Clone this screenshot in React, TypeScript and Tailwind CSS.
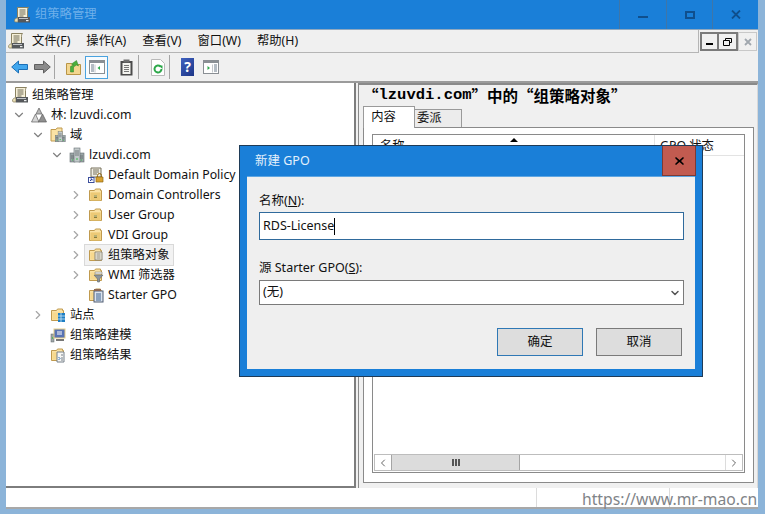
import { ChevronDown, ChevronLeft, ChevronRight } from 'lucide-react';
import type { ReactNode } from 'react';

const ui = 'font-["Noto_Sans","Noto_Sans_CJK_SC",sans-serif]';
const cjk = 'font-["Noto_Sans_CJK_SC",sans-serif]';

function Scroll({ size = 16 }: { size?: number }) {
  return (
    <svg width={size} height={size} viewBox="0 0 16 16">
      <path d="M3.500 .5h11c-1 1-1 2-1 3v7h-10z" fill="#f6f0d8" stroke="#8a8262" />
      <path d="M5.500 3h6M5.500 5h6M5.500 7h6M5.500 9h4" stroke="#6f6a56" />
      <path d="M.5 14c0-2.500 2-3.500 3.500-3v4H2c-1 0-1.500-.5-1.500-1z" fill="#ece2b8" stroke="#8a8262" strokeWidth=".8" />
      <rect x="4" y="10" width="12" height="5.500" fill="#55585b" />
      <rect x="5" y="11" width="9" height="1" fill="#c2c5c8" />
      <rect x="12" y="13" width="2.500" height="1.200" fill="#eceeef" />
    </svg>
  );
}

function Folder({ children }: { children?: ReactNode }) {
  return (
    <svg width="16" height="16" viewBox="0 0 16 16">
      <path d="M1.500 3.500h5l1-1.500h5v1.500h1v10h-12z" fill="#fae2a5" stroke="#c09a4e" />
      <path d="M2.500 5.500h10v7h-10z" fill="#f7d98e" />
      {children}
    </svg>
  );
}

function OuIcon() {
  return (
    <Folder>
      <rect x="2.500" y="5.500" width="10" height="8" fill="#ecc975" />
      <rect x="6" y="8" width="3" height="3" fill="#8b7a3a" />
      <path d="M6 9h3" stroke="#dfe7b0" />
    </Folder>
  );
}

function Servers() {
  return (
    <g>
      <rect x="1" y="6" width="5" height="9" fill="#9aa4a6" stroke="#677073" strokeWidth=".6" />
      <rect x="10" y="6" width="5" height="9" fill="#9aa4a6" stroke="#677073" strokeWidth=".6" />
      <rect x="5" y="1" width="6" height="14" fill="#c2c9ca" stroke="#677073" strokeWidth=".6" />
      <path d="M6 4h4M6 6h4M6 8h4M2 9h3M11 9h3M2 11h3M11 11h3" stroke="#5f686a" strokeWidth=".8" />
      <path d="M7 12h2M3 13h1M12 13h1" stroke="#39c24a" strokeWidth="1.200" />
    </g>
  );
}

function TreeIcon({ kind }: { kind: string }) {
  if (kind === 'root') return <Scroll />;
  if (kind === 'forest')
    return (
      <svg width="16" height="16" viewBox="0 0 16 16">
        <path d="M8 1l3 6H5z" fill="#b7b7b7" stroke="#5d5d5d" strokeWidth=".7" />
        <path d="M4.500 7l3.500 8H.5z" fill="#d6d6d6" stroke="#5d5d5d" strokeWidth=".7" />
        <path d="M11.500 7l4 8h-8z" fill="#8f8f8f" stroke="#5d5d5d" strokeWidth=".7" />
      </svg>
    );
  if (kind === 'domains')
    return (
      <svg width="16" height="16" viewBox="0 0 16 16">
        <path d="M1 2.500h5l1-1.500h5v13H1z" fill="#fae2a5" stroke="#c09a4e" />
        <g transform="translate(4.500 4) scale(.72)">
          <Servers />
        </g>
      </svg>
    );
  if (kind === 'domain')
    return (
      <svg width="16" height="16" viewBox="0 0 16 16">
        <Servers />
      </svg>
    );
  if (kind === 'policy')
    return (
      <svg width="16" height="16" viewBox="0 0 16 16">
        <path d="M3 1h10v9H3z" fill="#f1efe6" stroke="#77705a" />
        <path d="M5 3h6M5 5h6M5 7h4" stroke="#77705a" />
        <path d="M8 10h7v5H8z" fill="#d9a22f" stroke="#8f6716" strokeWidth=".7" />
        <path d="M9.500 10V8.500a2 2 0 014 0V10" fill="none" stroke="#8f6716" />
        <rect x=".5" y="10.500" width="5.500" height="5" fill="#fff" stroke="#3c4f9c" />
        <path d="M2 14l2-2M2.500 12H4v1.500" stroke="#2a3e9a" fill="none" />
      </svg>
    );
  if (kind === 'ou') return <OuIcon />;
  if (kind === 'gpo')
    return (
      <Folder>
        <path d="M7 5h7v8H7z" fill="#f2efe3" stroke="#8b8676" />
        <path d="M8.500 7h4M8.500 9h4M8.500 11h4" stroke="#8b8676" />
      </Folder>
    );
  if (kind === 'wmi')
    return (
      <Folder>
        <path d="M6 8h9l-3.500 4v3h-2v-3z" fill="#8c949c" stroke="#5c646c" strokeWidth=".6" />
        <path d="M7 5h7v2H7z" fill="#eef0f2" stroke="#8b8676" strokeWidth=".6" />
      </Folder>
    );
  if (kind === 'starter')
    return (
      <Folder>
        <rect x="6" y="4" width="9" height="11" fill="#dbe3ee" stroke="#4f5d73" />
        <path d="M8 7h5M8 9h5M8 11h5M8 13h5" stroke="#3d628f" />
        <path d="M6 2h7v2H6z" fill="#8f6a55" />
      </Folder>
    );
  if (kind === 'site')
    return (
      <Folder>
        <rect x="8" y="6" width="7" height="9" fill="#1f7fc4" />
        <path d="M8 9h7M8 12h7M11 6v9" stroke="#cfe7f7" strokeWidth=".8" />
      </Folder>
    );
  if (kind === 'model')
    return (
      <svg width="16" height="16" viewBox="0 0 16 16">
        <rect x="1" y="7" width="3" height="8" fill="#9ea5a8" stroke="#5f686a" strokeWidth=".5" />
        <rect x="4" y="2" width="11" height="9" fill="#5873b4" stroke="#e8cf87" />
        <path d="M7 5h5M7 7h5" stroke="#fff" />
        <path d="M6 13h8" stroke="#777" strokeWidth="2" />
        <path d="M2 11h1" stroke="#39c24a" strokeWidth="1.500" />
      </svg>
    );
  return (
    <Folder>
      <path d="M7 5h7v10H7z" fill="#f7f7f5" stroke="#77808a" />
      <path d="M8.500 10l1.500 1.500L8.500 13" stroke="#2f6db3" fill="none" />
      <path d="M11 8h2M11 11h2M11 13h2" stroke="#77808a" />
    </Folder>
  );
}

const tree = [
  { label: '组策略管理', icon: 'root', depth: 0, arrow: '' },
  { label: '林: lzuvdi.com', icon: 'forest', depth: 0, arrow: 'down' },
  { label: '域', icon: 'domains', depth: 1, arrow: 'down' },
  { label: 'lzuvdi.com', icon: 'domain', depth: 2, arrow: 'down' },
  { label: 'Default Domain Policy', icon: 'policy', depth: 3, arrow: '' },
  { label: 'Domain Controllers', icon: 'ou', depth: 3, arrow: 'right' },
  { label: 'User Group', icon: 'ou', depth: 3, arrow: 'right' },
  { label: 'VDI Group', icon: 'ou', depth: 3, arrow: 'right' },
  { label: '组策略对象', icon: 'gpo', depth: 3, arrow: 'right', selected: true },
  { label: 'WMI 筛选器', icon: 'wmi', depth: 3, arrow: 'right' },
  { label: 'Starter GPO', icon: 'starter', depth: 3, arrow: '' },
  { label: '站点', icon: 'site', depth: 1, arrow: 'right' },
  { label: '组策略建模', icon: 'model', depth: 1, arrow: '' },
  { label: '组策略结果', icon: 'result', depth: 1, arrow: '' },
];

const menus = ['文件(F)', '操作(A)', '查看(V)', '窗口(W)', '帮助(H)'];

function ToolButton({ active, children }: { active?: boolean; children: ReactNode }) {
  return (
    <div className={`flex h-[23px] w-[23px] items-center justify-center ${active ? 'border border-[#4aa3df] bg-[#f7fbfe]' : ''}`}>
      {children}
    </div>
  );
}

function Pane({ play }: { play: 'left' | 'right' }) {
  return (
    <svg width="16" height="14" viewBox="0 0 16 14">
      <rect x=".5" y=".5" width="15" height="13" fill="#fff" stroke="#8a8f94" />
      <rect x="1" y="1" width="14" height="2" fill="#8a8f94" />
      {play === 'left' ? (
        <>
          <path d="M2 5h3M2 7h3M2 9h3M2 11h3" stroke="#6b7a8a" />
          <path d="M6 4.500v8" stroke="#c2c6ca" />
          <path d="M11 6v4L8.500 8z" fill="#2da84a" />
        </>
      ) : (
        <>
          <path d="M11 5h3M11 7h3M11 9h3M11 11h3" stroke="#6b7a8a" />
          <path d="M4.500 6v4L7 8z" fill="#2da84a" />
          <path d="M9.500 4.500v8" stroke="#c2c6ca" />
        </>
      )}
    </svg>
  );
}

function Toolbar() {
  return (
    <div className="flex h-[30px] items-center border-b-2 border-[#9b9b9b] pl-[2px]">
      <ToolButton>
        <svg width="17" height="14" viewBox="0 0 17 14">
          <path d="M7.500 1L.7 7l6.800 6V9.500h9v-5h-9z" fill="#41a7ee" stroke="#1c6fb6" />
        </svg>
      </ToolButton>
      <ToolButton>
        <svg width="17" height="14" viewBox="0 0 17 14">
          <path d="M9.500 1l6.800 6-6.800 6V9.500h-9v-5h9z" fill="#8a8a8a" stroke="#5f5f5f" />
        </svg>
      </ToolButton>
      <div className="mr-[7px] h-[24px] w-px bg-[#a5a5a5]" />
      <ToolButton>
        <svg width="15" height="16" viewBox="0 0 15 16">
          <path d="M.5 4.500h5l1 1h8v10H.5z" fill="#f3d68f" stroke="#b99546" />
          <path d="M4.500 13V7.500l3-1.500-2-1 5-3.500 2 5.500-2-1-3 2v5z" fill="#49b03c" stroke="#2f7f28" strokeWidth=".5" />
        </svg>
      </ToolButton>
      <ToolButton active>
        <Pane play="left" />
      </ToolButton>
      <div className="ml-[7px]">
        <ToolButton>
          <svg width="13" height="17" viewBox="0 0 13 17">
            <rect x=".5" y="2" width="12" height="14.500" fill="#4b4b4b" />
            <rect x="2.500" y="4" width="8" height="11" fill="#f4f4f0" />
            <rect x="3.500" y=".5" width="6" height="3" fill="#6e6e6e" />
            <path d="M4 6.500h5M4 8.500h5M4 10.500h5M4 12.500h5" stroke="#777" />
          </svg>
        </ToolButton>
      </div>
      <div className="mr-[7px] h-[24px] w-px bg-[#a5a5a5]" />
      <ToolButton>
        <svg width="14" height="17" viewBox="0 0 14 17">
          <path d="M.5 .5h9l4 4v12H.5z" fill="#fff" stroke="#b9b9b9" />
          <path d="M10.500 10a3.500 3.500 0 11-1-2.500" fill="none" stroke="#2da84a" strokeWidth="2" />
          <path d="M7.500 6.500h4v3.500z" fill="#2da84a" />
        </svg>
      </ToolButton>
      <div className="mr-[6px] h-[24px] w-px bg-[#a5a5a5]" />
      <ToolButton>
        <div className={`flex h-[18px] w-[13px] items-center justify-center bg-[linear-gradient(135deg,#3f62c0,#1d3587)] text-[14px] font-bold leading-none text-white ${ui}`}>?</div>
      </ToolButton>
      <ToolButton>
        <Pane play="right" />
      </ToolButton>
    </div>
  );
}

function TreePane() {
  return (
    <div className="flex h-[405px] w-[350px] flex-col border-r-2 border-b-2 border-[#7d7d7d] bg-white pt-[2px] text-[12.300px] leading-[20px] text-[#111]">
      {tree.map((row) => (
        <div key={row.label} className="flex h-[20px] items-center pl-[5px]">
          <div className={row.depth === 1 ? 'w-[19px]' : row.depth === 2 ? 'w-[38px]' : row.depth === 3 ? 'w-[57px]' : 'w-0'} />
          <div className="flex w-[15px] justify-center">
            {row.arrow === 'down' && <ChevronDown size={14} strokeWidth={2} color="#808080" />}
            {row.arrow === 'right' && <ChevronRight size={14} strokeWidth={2} color="#a6a6a6" />}
          </div>
          <div className={`flex h-[20px] items-center gap-[4px] pl-[3px] pr-[3px] ${row.selected ? 'bg-[#f2f2f2] outline outline-[#d9d9d9]' : ''} ${row.depth === 0 && !row.arrow ? '-ml-[17px]' : 'ml-[2px]'}`}>
            <TreeIcon kind={row.icon} />
            <span className="whitespace-nowrap">{row.label}</span>
          </div>
        </div>
      ))}
    </div>
  );
}

function RightPane() {
  return (
    <div className="ml-[2px] flex h-[405px] flex-1 flex-col border-r border-l border-t-2 border-l-[#8a8a8a] border-r-[#d8d8d8] border-t-[#8a8a8a] pl-[4px] pr-[3px]">
      <div className='flex h-[21px] items-center font-["Liberation_Mono",monospace] text-[15.500px] font-bold text-black' lang="zh-CN">
        <span className={cjk}>“</span>
        <span>lzuvdi.com</span>
        <span className={cjk}>”中的“组策略对象”</span>
      </div>
      <div className="flex h-[21px] items-end text-[12.300px] text-[#111]">
        <div className="z-10 -mb-px flex h-[22px] w-[52px] items-center justify-center border border-b-0 border-[#9a9a9a] bg-white pr-[11px]">内容</div>
        <div className="flex h-[18px] w-[47px] items-center border border-l-0 border-b-0 border-[#9a9a9a] bg-[#ececec] pl-[2px]">委派</div>
      </div>
      <div className="h-[356px] border border-[#8a8a8a] bg-white pb-[9px] pl-[8px] pr-[8px] pt-[6px]">
        <div className="flex h-full flex-col border border-[#8a8a8a]">
          <div className="flex h-[21px] border-b border-[#e3e3e3] text-[12.300px] leading-[22px] text-[#111]">
            <div className="relative w-[282px] border-r border-[#e3e3e3] pl-[7px]">
              名称
              <div className="absolute left-[137px] top-[3px] h-0 w-0 border-x-[4px] border-b-[4px] border-x-transparent border-b-black" />
            </div>
            <div className="flex-1 pl-[5px]">GPO 状态</div>
          </div>
          <div className="flex-1" />
          <div className="mx-[1px] mb-[1px] flex h-[17px] border border-[#bdbdbd]">
            <div className="flex w-[16px] items-center justify-center">
              <ChevronLeft size={12} color="#666" />
            </div>
            <div className="flex w-[129px] items-center justify-center gap-[1px] border-x border-[#a5a5a5] bg-[#dcdcdc]">
              <div className="h-[7px] w-[2px] bg-[#555]" />
              <div className="h-[7px] w-[2px] bg-[#555]" />
              <div className="h-[7px] w-[2px] bg-[#555]" />
            </div>
            <div className="flex-1" />
            <div className="flex w-[17px] items-center justify-center border-l border-[#dcdcdc]">
              <ChevronRight size={12} color="#666" />
            </div>
          </div>
        </div>
      </div>
    </div>
  );
}

function Dialog() {
  return (
    <div className={`absolute left-[239px] top-[145px] flex h-[232px] w-[464px] flex-col border border-[#1f3b57] bg-[#1a7fd8] pb-[7px] pl-[7px] pr-[7px] text-[12.500px] text-[#111] ${ui}`}>
      <div className="-ml-[7px] -mr-[7px] flex h-[30px] items-start justify-between pl-[15px]">
        <span className="pt-[6px] text-[12.500px] leading-[18px] text-[#e4f1fc]">新建 GPO</span>
        <div className="mr-[6px] flex h-[30px] w-[34px] items-center justify-center border border-t-0 border-[#7c3a34] bg-[#c25b50]">
          <svg width="9" height="8" viewBox="0 0 9 8">
            <path d="M1 0l3.500 3L8 0l1 1-3 3 3 3-1 1-3.500-3L1 8 0 7l3-3-3-3z" fill="#000" />
          </svg>
        </div>
      </div>
      <div className="flex flex-1 flex-col border-t border-[#5fa6e2] bg-[#efefef] pl-[12px] pr-[11px]">
        <div className="mt-[15px] h-[18px] leading-[18px]">
          名称(<span className="underline">N</span>):
        </div>
        <div className="mt-[2px] flex h-[28px] items-center border border-[#2f6a9c] bg-white pl-[3px]">
          RDS-License
          <span className="h-[17px] w-px bg-black" />
        </div>
        <div className="mt-[19px] h-[18px] leading-[18px]">
          源 Starter GPO(<span className="underline">S</span>):
        </div>
        <div className="mt-[3px] flex h-[25px] items-center justify-between border border-[#7a7a7a] bg-white pl-[3px] pr-[2px]">
          (无)
          <ChevronDown size={12} strokeWidth={3} color="#555" />
        </div>
        <div className="mt-[23px] flex justify-end gap-[13px] pr-[2px]">
          <div className="flex h-[28px] w-[86px] items-center justify-center border border-[#2f78b5] bg-[#dddddd]">确定</div>
          <div className="flex h-[28px] w-[86px] items-center justify-center border border-[#7a7a7a] bg-[#dddddd]">取消</div>
        </div>
      </div>
    </div>
  );
}

export default function App() {
  return (
    <div className={`relative flex h-[514px] w-[765px] flex-col overflow-hidden bg-[#8cb4d9] pb-[5px] pl-[6px] pr-[7px] ${ui}`}>
      <div className="flex h-[30px] items-start border-b border-[#8fa8bf] bg-[#1a7fd8]">
        <div className="flex h-[29px] flex-1 items-center gap-[5px] pl-[8px]">
          <Scroll />
          <span className="text-[12.300px] text-[#6fb0ea]">组策略管理</span>
        </div>
        <div className="flex h-[29px] w-[47px] items-center justify-center border-l border-[#3f76a8]">
          <div className="mt-[4px] h-[2px] w-[10px] bg-[#0f4f8d]" />
        </div>
        <div className="flex h-[29px] w-[46px] items-center justify-center border-l border-[#3f76a8]">
          <div className="h-[8px] w-[10px] border-2 border-[#0f4f8d]" />
        </div>
        <div className="flex h-[29px] w-[46px] items-center justify-center border-l border-[#3f76a8]">
          <svg width="10" height="9" viewBox="0 0 10 9">
            <path d="M1 .5l8 8M9 .5l-8 8" stroke="#0f4f8d" strokeWidth="1.800" />
          </svg>
        </div>
      </div>
      <div className="flex flex-1 flex-col bg-[#f0f0f0]">
        <div className="flex h-[23px] items-center text-[12.300px] text-[#111]">
          <div className="flex h-full flex-1 items-center border-b border-r border-[#b5b5b5] pl-[2px]">
            <div className="mr-[8px]">
              <Scroll />
            </div>
            <div className="flex flex-1 gap-[16px] pt-[1px]">
              {menus.map((menu) => (
                <span key={menu}>{menu}</span>
              ))}
            </div>
          </div>
          <div className="ml-[1px] mr-[1px] flex">
            <div className="flex h-[19px] w-[19px] items-center justify-center border-2 border-[#7a7a7a]">
              <div className="mt-[5px] h-[2px] w-[7px] bg-black" />
            </div>
            <div className="flex h-[19px] w-[19px] items-center justify-center border-2 border-l-0 border-[#7a7a7a]">
              <svg width="9" height="8" viewBox="0 0 9 8">
                <path d="M2.500 2.500v-2h6v4h-2M.5 2.500h6v5h-6z" fill="none" stroke="#000" />
              </svg>
            </div>
            <div className="flex h-[19px] w-[19px] items-center justify-center border border-[#c8c8c8]">
              <svg width="8" height="8" viewBox="0 0 8 8">
                <path d="M1 1l6 6M7 1L1 7" stroke="#a0a7ae" strokeWidth="1.800" />
              </svg>
            </div>
          </div>
        </div>
        <Toolbar />
        <div className="flex">
          <TreePane />
          <RightPane />
        </div>
        <div className="flex flex-1 border-b-2 border-[#a8a8a8] bg-white">
          <div className="w-[531px] border-r border-[#dcdcdc]" />
          <div className="w-[133px] border-r border-[#dcdcdc]" />
          <div className="flex-1" />
        </div>
      </div>
      <Dialog />
      <span className='absolute left-[582px] top-[489px] font-["Noto_Sans",sans-serif] text-[15.700px] leading-[20px] text-[#7f8488]'>
        https://www.mr-mao.cn
      </span>
    </div>
  );
}
